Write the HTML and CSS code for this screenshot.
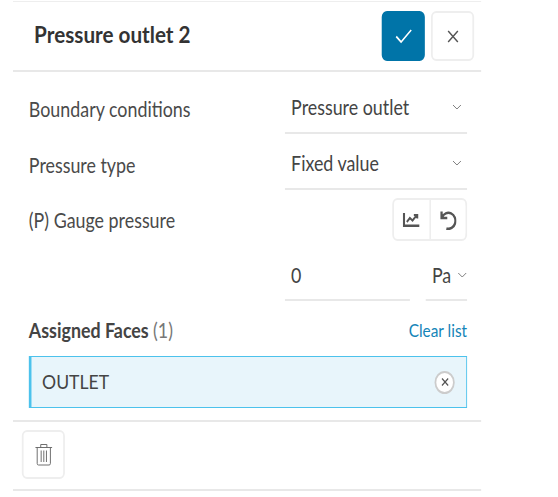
FILE: index.html
```html
<!DOCTYPE html>
<html lang="en">

<head>
  <meta charset="UTF-8">
  <title>Pressure outlet 2</title>
  <link rel="stylesheet" href="styles.css">
</head>

<body>
  <div class="panel">
    <div class="panel-header">
      <h1>Pressure outlet 2</h1>
      <button class="btn btn-confirm">
        <svg width="20" height="16" viewBox="0 0 20 16"><path d="M1.500 8.500 7 14 18.500 2" /></svg>
      </button>
      <button class="btn btn-close">
        <svg width="14" height="13" viewBox="0 0 14 13"><path d="M1.500 1 12.500 12M12.500 1 1.500 12" /></svg>
      </button>
    </div>

    <div class="panel-body">
      <div class="row">
        <label>Boundary conditions</label>
        <div class="select">
          <span>Pressure outlet</span>
          <svg class="chevron" width="11" height="6" viewBox="0 0 11 6"><path d="M1 1 5.500 5 10 1" /></svg>
        </div>
      </div>

      <div class="row">
        <label>Pressure type</label>
        <div class="select">
          <span>Fixed value</span>
          <svg class="chevron" width="11" height="6" viewBox="0 0 11 6"><path d="M1 1 5.500 5 10 1" /></svg>
        </div>
      </div>

      <div class="row row-gauge">
        <label>(P) Gauge pressure</label>
        <div class="btn-group">
          <button class="group-btn">
            <svg width="19" height="14" viewBox="0 0 19 14"><path class="thick" d="M1.200 0V12.800H19" /><path class="thin" d="M4.500 9 8 5 11 7.500 15.500 2.500M12.500 2H16.500V5.500" /></svg>
          </button>
          <button class="group-btn">
            <svg width="20" height="20" viewBox="0 0 20 20"><path class="thick" d="M3 1.500V8H9.500M3.500 7.500A8 8 0 1 1 8.500 18.500" /></svg>
          </button>
        </div>
      </div>

      <div class="value-row">
        <div class="value-input">0</div>
        <div class="unit-select">
          <span>Pa</span>
          <svg class="chevron" width="11" height="6" viewBox="0 0 11 6"><path d="M1 1 5.500 5 10 1" /></svg>
        </div>
      </div>

      <div class="faces-head">
        <div class="faces-title">Assigned Faces <span>(1)</span></div>
        <a class="clear-link">Clear list</a>
      </div>

      <div class="face-item">
        <span>OUTLET</span>
        <button class="face-remove">
          <svg width="10" height="10" viewBox="0 0 10 10"><path d="M1.500 1.500 8.500 8.500M8.500 1.500 1.500 8.500" /></svg>
        </button>
      </div>
    </div>

    <div class="panel-footer">
      <button class="btn btn-delete">
        <svg width="20" height="23" viewBox="0 0 20 23">
          <path d="M.500 4.500H19.500M6.500 4.500V1.500H13.500V4.500M2.500 4.500V20.500Q2.500 22 4 22H16Q17.500 22 17.500 20.500V4.500M7 7.500V19M10 7.500V19M13 7.500V19" />
        </svg>
      </button>
    </div>
  </div>
</body>

</html>
```
FILE: styles.css
```css
body {
  font-family: Lato, sans-serif;
  margin: 0;
  padding: 1px 0 0 0;
  background: white;
  color: #444;
}

/* the whole panel is narrowed as in the source picture */
.panel {
  width: 532px;
  margin-left: 13px;
  border-top: 1px solid #eeeeee;
  border-bottom: 2px solid #e8e8e8;
  transform: scaleX(0.88);
  transform-origin: left top;
}

.panel-header {
  display: flex;
  align-items: center;
  gap: 7px;
  height: 68px;
  padding: 0 8px 0 24px;
  border-bottom: 2px solid #e8e8e8;
}

.panel-header h1 {
  flex: 1;
  margin: 0 0 4px 0;
  font-size: 23.500px;
  font-weight: 700;
  color: #333;
}

.btn {
  display: flex;
  align-items: center;
  justify-content: center;
  padding: 0;
  background: white;
  border: 2px solid #eeeeee;
  border-radius: 6px;
  cursor: pointer;
}

.btn svg path,
.group-btn svg path,
.chevron path,
.face-remove svg path {
  fill: none;
  stroke: #555;
}

.btn-confirm {
  width: 49px;
  height: 50px;
  margin-left: 1px;
  background: #0074a8;
  border-color: #0074a8;
}

.btn-confirm svg path {
  stroke: white;
  stroke-width: 1.800;
}

.btn-close {
  width: 49px;
  height: 50px;
}

.btn-close svg path {
  stroke-width: 1.700;
}

.panel-body {
  padding: 6px 16px 12px 18px;
  border-bottom: 2px solid #e8e8e8;
}

.row {
  display: grid;
  grid-template-columns: 291px 207px;
  align-items: center;
  height: 56px;
  font-size: 20.300px;
}

.row label {
  padding-top: 6px;
  color: #4a4a4a;
}

.select {
  display: flex;
  align-items: center;
  justify-content: space-between;
  height: 55px;
  padding: 6px 6px 2px 7px;
  box-sizing: border-box;
  border-bottom: 2px solid #e8e8e8;
}

.chevron path {
  stroke: #777;
  stroke-width: 1;
}

.row-gauge {
  height: 59px;
}

.row-gauge label {
  padding-top: 0;
}

.btn-group {
  display: flex;
  justify-self: end;
  width: 85px;
  height: 43px;
  box-sizing: border-box;
  border: 2px solid #eeeeee;
  border-radius: 6px;
}

.group-btn {
  flex: 1;
  display: flex;
  align-items: center;
  justify-content: center;
  padding: 0;
  background: white;
  border: none;
  border-radius: 6px;
}

.group-btn + .group-btn {
  border-left: 2px solid #eeeeee;
  border-radius: 0 6px 6px 0;
}

.group-btn .thick {
  stroke-width: 2.600;
}

.group-btn .thin {
  stroke-width: 2;
}

.value-row {
  display: flex;
  justify-content: flex-end;
  gap: 18px;
  height: 52px;
  font-size: 20.300px;
}

.value-input {
  width: 142px;
  padding: 14px 0 0 7px;
  box-sizing: border-box;
  border-bottom: 2px solid #e8e8e8;
}

.unit-select {
  display: flex;
  align-items: center;
  justify-content: space-between;
  width: 47px;
  padding: 4px 0 2px 7px;
  box-sizing: border-box;
  border-bottom: 2px solid #e8e8e8;
}

.faces-head {
  display: flex;
  align-items: center;
  justify-content: space-between;
  height: 55px;
  padding-top: 3px;
  box-sizing: border-box;
  font-size: 17.500px;
}

.faces-title {
  font-size: 20.300px;
  font-weight: 700;
  color: #444;
}

.faces-title span {
  font-weight: 400;
  color: #777;
}

.clear-link {
  color: #1484b8;
}

.face-item {
  display: flex;
  align-items: center;
  justify-content: space-between;
  height: 52px;
  padding: 0 13px 0 12px;
  box-sizing: border-box;
  background: #e8f5fb;
  border: 1px solid #4cc2ec;
  border-left-width: 3px;
  font-size: 20px;
}

.face-item span {
  margin-bottom: 2px;
}

.face-remove {
  display: flex;
  align-items: center;
  justify-content: center;
  width: 23px;
  height: 23px;
  padding: 0;
  background: white;
  border: 2px solid #cccccc;
  border-radius: 50%;
}

.face-remove svg path {
  stroke-width: 1.400;
}

.panel-footer {
  padding: 8px 0 10px 10px;
}

.btn-delete {
  width: 49px;
  height: 49px;
}

.btn-delete svg path {
  stroke: #666;
  stroke-width: 1;
}
```
